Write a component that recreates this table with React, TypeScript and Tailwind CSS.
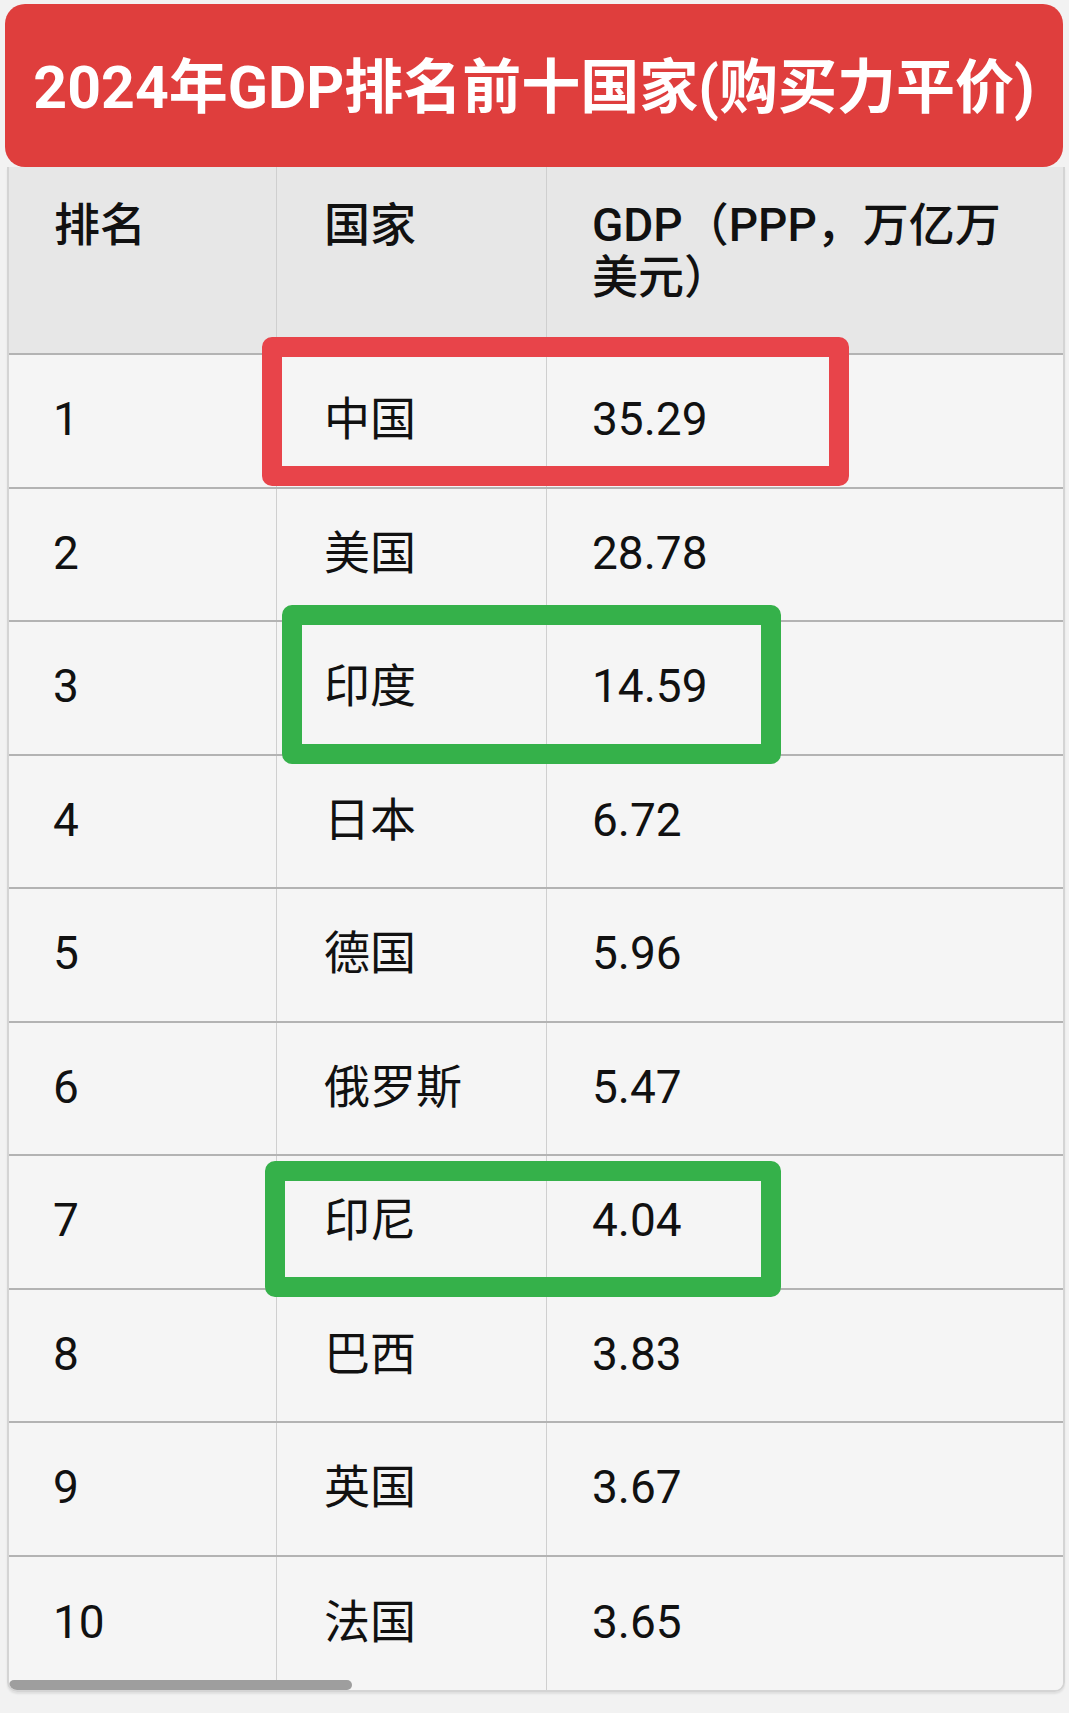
import React from 'react';

const rows = [
  { rank: '1', country: '中国', gdp: '35.29' },
  { rank: '2', country: '美国', gdp: '28.78' },
  { rank: '3', country: '印度', gdp: '14.59' },
  { rank: '4', country: '日本', gdp: '6.72' },
  { rank: '5', country: '德国', gdp: '5.96' },
  { rank: '6', country: '俄罗斯', gdp: '5.47' },
  { rank: '7', country: '印尼', gdp: '4.04' },
  { rank: '8', country: '巴西', gdp: '3.83' },
  { rank: '9', country: '英国', gdp: '3.67' },
  { rank: '10', country: '法国', gdp: '3.65' },
];

const font = { fontFamily: 'Roboto, "Noto Sans CJK SC", sans-serif' };

const App = () => {
  return (
    <div className="relative w-[1069px] h-[1713px] bg-[#f2f2f2] overflow-hidden" style={font}>
      <div className="pt-[4px] pl-[5px]">
        {/* Title banner */}
        <div className="w-[1058px] h-[163px] rounded-[20px] bg-[#df3e3d] flex items-center justify-center pt-[4px]">
          <h1 className="text-white text-[59px] font-bold leading-none">
            2024年GDP排名前十国家(购买力平价)
          </h1>
        </div>
      </div>

      {/* Table */}
      <div className="relative ml-[7px] w-[1058px] border-x-2 border-b-2 border-[#d4d4d4] rounded-b-[10px] overflow-hidden shadow-[0_2px_2px_rgba(0,0,0,0.08)] text-[#111] text-[46px]">
        <div className="grid grid-cols-[268px_270px_1fr] h-[188px] bg-[#e7e7e7] border-b-2 border-[#b3b3b3] font-medium leading-[52px]">
          <div className="pl-[45px] pt-[32px] border-r border-[#cfcfcf]">排名</div>
          <div className="pl-[47px] pt-[32px] border-r border-[#cfcfcf]">国家</div>
          <div className="pl-[45px] pt-[32px] pr-[46px]">
            <span className="block max-w-[425px]">GDP（PPP，万亿万美元）</span>
          </div>
        </div>

        {rows.map((row, i) => (
          <div
            key={row.rank}
            className={`grid grid-cols-[268px_270px_1fr] h-[133.5px] bg-[#f5f5f5] ${i < rows.length - 1 ? 'border-b-2 border-[#b3b3b3]' : ''}`}
          >
            <div className="pl-[44px] flex items-center border-r border-[#cfcfcf] pb-[2px]">{row.rank}</div>
            <div className="pl-[47px] flex items-center border-r border-[#cfcfcf] pb-[2px]">{row.country}</div>
            <div className="pl-[45px] flex items-center pb-[2px]">{row.gdp}</div>
          </div>
        ))}

        {/* horizontal scrollbar thumb */}
        <div className="absolute left-0 bottom-0 w-[343px] h-[10px] rounded-full bg-[#9e9e9e]" />
      </div>

      {/* highlight frames */}
      <div className="absolute left-[262px] top-[337px] w-[587px] h-[149px] border-[20px] border-[#e8444a] rounded-[10px]" />
      <div className="absolute left-[282px] top-[605px] w-[499px] h-[159px] border-[20px] border-[#35b14a] rounded-[10px]" />
      <div className="absolute left-[265px] top-[1161px] w-[516px] h-[136px] border-[20px] border-[#35b14a] rounded-[10px]" />
    </div>
  );
};

export default App;
